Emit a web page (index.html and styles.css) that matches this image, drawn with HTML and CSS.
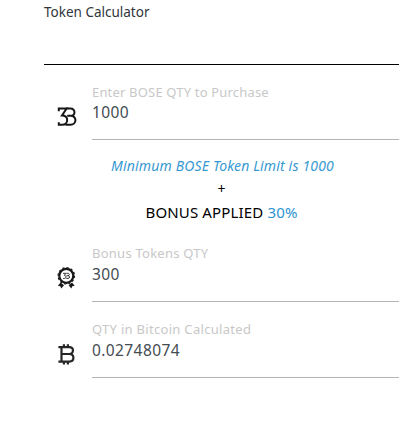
FILE: index.html
```html
<!DOCTYPE html>
<html lang="en">
<head>
  <meta charset="UTF-8">
  <meta name="viewport" content="width=device-width, initial-scale=1.0">
  <title>Token Calculator</title>
  <link rel="stylesheet" href="styles.css">
</head>
<body>

<div class="calculator">
  <h1 class="title">Token Calculator</h1>

  <div class="row row-qty">
    <svg class="icon" viewBox="0 0 20 20">
      <g fill="none" stroke="#161616" stroke-width="2">
        <path d="M1.8 4.2V1.6H9.6L5 8.4C8.4 8.4 10.2 10.2 10.2 13C10.2 16 8 17.8 5.2 17.8H1.8V15.2"/>
        <path d="M9 1.6H13.4C19 1.6 18.6 8.8 13.6 8.8H10.2M13.6 8.8C20.2 8.8 20 17.8 13.4 17.8H8.4"/>
      </g>
    </svg>
    <div class="field">
      <div class="label">Enter BOSE QTY to Purchase</div>
      <div class="value">1000</div>
    </div>
  </div>

  <div class="bonus">
    <div class="limit">Minimum BOSE Token Limit is 1000</div>
    <div class="plus">+</div>
    <div class="applied">BONUS APPLIED <span class="percent">30%</span></div>
  </div>

  <div class="row row-bonus">
    <svg class="icon" viewBox="0 0 20 22">
      <g fill="none" stroke="#181818">
        <circle cx="9.3" cy="8.8" r="7" stroke-width="2.2"/>
        <circle cx="9.3" cy="8.8" r="8.2" stroke-width="1.2" stroke-dasharray="2.2 2.09"/>
        <path stroke-width=".9" d="M6.1 6.3H8.7L7.4 8.4C9.5 8.6 9.4 11.4 7.6 11.4H6.1M9.3 6.3H10.8C12.8 6.3 12.8 8.7 10.8 8.7H9.5M10.8 8.7C13.2 8.7 13.2 11.4 11 11.4H9.3"/>
      </g>
      <path fill="#181818" d="M3.6 15.4L.9 18.8L3.3 19.3L4.3 21.6L7 18.2ZM15 15.4L17.7 18.8L15.3 19.3L14.3 21.6L11.6 18.2Z"/>
    </svg>
    <div class="field">
      <div class="label label-bonus">Bonus Tokens QTY</div>
      <div class="value">300</div>
    </div>
  </div>

  <div class="row row-bitcoin">
    <svg class="icon" viewBox="0 0 20 22">
      <g fill="none" stroke="#262626" stroke-width="2.2">
        <path d="M1.4 4.2H12.2C17.2 4.2 17.2 11 12.2 11H4.6M12.2 11C17.8 11 17.8 18.6 12.2 18.6H1.4M4.5 4.2V18.6"/>
        <path d="M6.9 1.2V4M10.9 1.2V4M6.9 18.6V21.6M10.9 18.6V21.6"/>
      </g>
    </svg>
    <div class="field">
      <div class="label label-bitcoin">QTY in Bitcoin Calculated</div>
      <div class="value">0.02748074</div>
    </div>
  </div>
</div>

</body>
</html>
```

FILE: styles.css
```css
* {
  padding: 0;
  margin: 0;
  box-sizing: border-box;
}

body {
  font-family: "Noto Sans", "Open Sans", sans-serif;
  background-color: #fff;
  color: #454c52;
}

.calculator {
  width: 399px;
  padding-left: 44px;
}

.title {
  height: 65px;
  padding-top: 2px;
  border-bottom: 1px solid #000;
  color: #30363b;
  font-size: 13.5px;
  font-weight: normal;
  line-height: 20px;
}

.row {
  display: flex;
  height: 75px;
  padding-left: 13px;
}

.icon {
  flex: none;
  width: 20px;
  height: 20px;
  margin: 42px 15px 0 0;
}

.field {
  flex: 1;
  padding-top: 17px;
  border-bottom: 1px solid #b4b4b4;
  white-space: nowrap;
}

.label {
  color: #c8c8c8;
  font-size: 13px;
  letter-spacing: 0.18px;
  line-height: 20px;
}

.label-bonus {
  letter-spacing: 0.25px;
}

.label-bitcoin {
  letter-spacing: 0.3px;
}

.value {
  font-size: 15.5px;
  letter-spacing: 0.4px;
  line-height: 22px;
}

.row-qty .value {
  line-height: 20px;
}

.bonus {
  height: 86px;
  padding-top: 15px;
  color: #000;
  font-size: 14px;
  text-align: center;
}

.limit {
  padding-left: 2px;
  color: #3899d1;
  font-size: 14px;
  font-style: italic;
  letter-spacing: 0.16px;
  line-height: 22px;
}

.plus {
  line-height: 24px;
}

.applied {
  font-size: 15px;
  letter-spacing: 0.15px;
  line-height: 23px;
}

.percent {
  color: #2b94d0;
}

.row-bonus {
  height: 76px;
}

.row-bonus .icon,
.row-bitcoin .icon {
  height: 22px;
  margin-top: 41px;
}

.row-bitcoin {
  height: 76px;
}
```
